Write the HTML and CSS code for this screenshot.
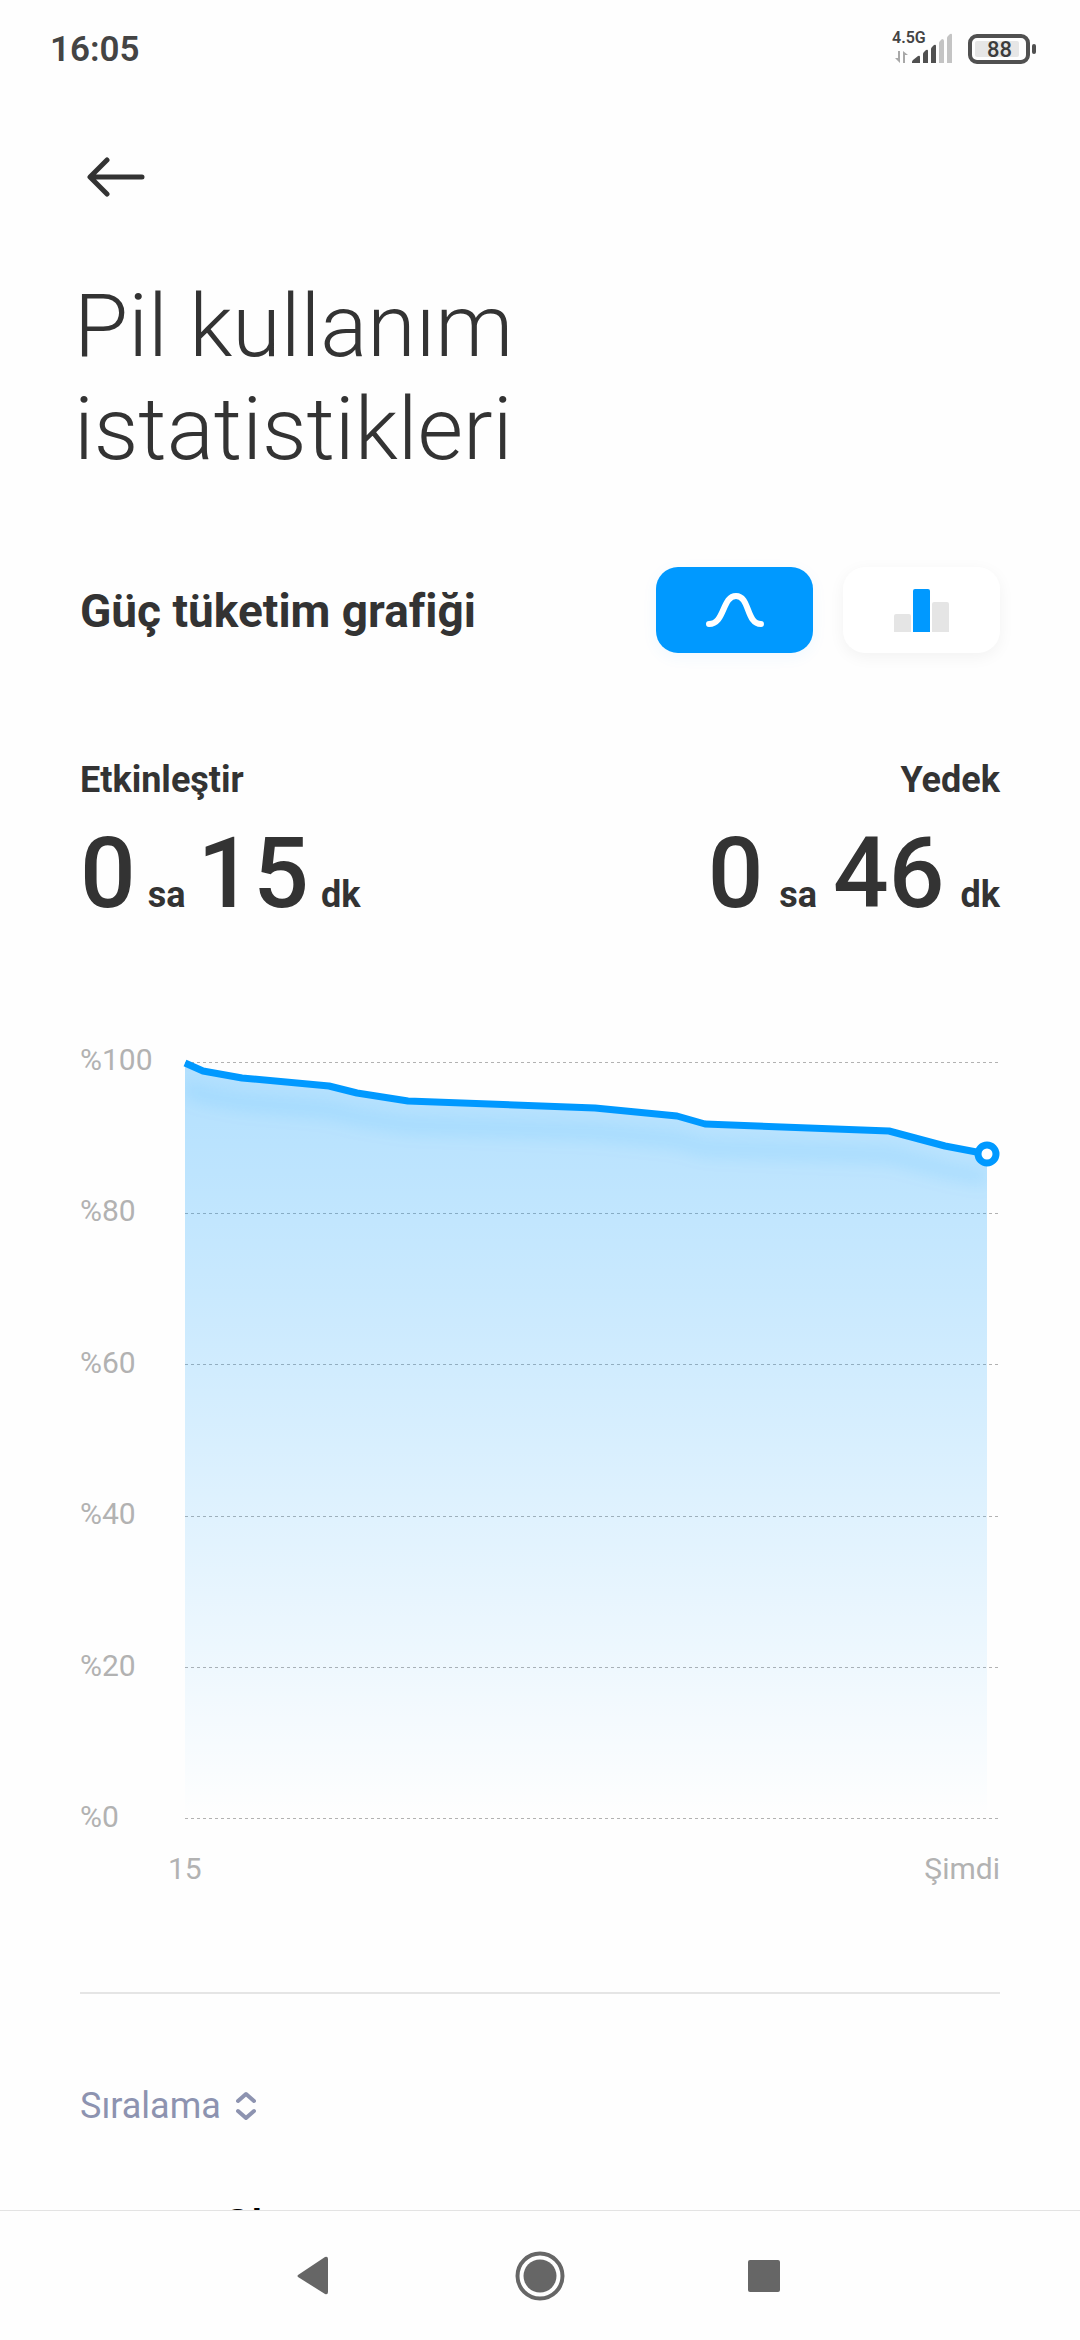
FILE: index.html
```html
<!DOCTYPE html>
<html lang="tr">
<head>
  <meta charset="utf-8">
  <meta name="viewport" content="width=device-width, initial-scale=1">
  <title>Pil kullanım istatistikleri</title>
  <link rel="stylesheet" href="styles.css">
</head>
<body>
  <header class="status-bar">
    <span class="clock">16:05</span>
    <div class="indicators">
      <div class="mobile">
        <span class="network">4.5G</span>
        <svg class="signal" viewBox="0 0 58 32" aria-hidden="true">
          <path d="M5 18V30L0 25H3V18ZM8 30V18L13 22H10V30Z" fill="#a8a8a8"/>
          <path d="M17 30V29Q17 28 18 27L23 23Q25 22 25 24V30Z" fill="#505050"/>
          <path d="M28 30V21Q28 20 29 19L31 17Q33 16 33 18V30ZM36 30V16Q36 15 37 14L39 12Q41 11 41 13V30Z" fill="#505050"/>
          <path d="M44 30V10Q44 9 45 8L47 6Q49 6 49 8V30ZM52 30V5Q52 4 53 3L55 1Q57 0 57 2V30Z" fill="#c4c4c4"/>
        </svg>
      </div>
      <div class="battery"><span class="battery-level">88</span></div>
    </div>
  </header>

  <main class="content">
    <button class="back" type="button" aria-label="Geri">
      <svg viewBox="0 0 60 42" aria-hidden="true"><path d="M55 21H4M20 4L3 21L20 38" fill="none" stroke="#333" stroke-width="5" stroke-linecap="round" stroke-linejoin="round"/></svg>
    </button>
    <h1 class="title">Pil kullanım istatistikleri</h1>

    <section class="usage">
      <div class="usage-head">
        <h2 class="usage-title">Güç tüketim grafiği</h2>
        <div class="toggle">
          <button class="toggle-button active" type="button" aria-pressed="true" aria-label="Çizgi grafik">
            <svg viewBox="0 0 60 44" aria-hidden="true"><path d="M4 36C20 36 17 8 31 8C45 8 41 36 56 36" fill="none" stroke="#fff" stroke-width="6" stroke-linecap="round"/></svg>
          </button>
          <button class="toggle-button" type="button" aria-pressed="false" aria-label="Çubuk grafik">
            <svg viewBox="0 0 60 44" aria-hidden="true"><path d="M2 44V28Q2 26 4 26H17Q19 26 19 28V44ZM40 44V16Q40 14 42 14H55Q57 14 57 16V44Z" fill="#e5e5e5"/><path d="M21 44V3Q21 1 23 1H36Q38 1 38 3V44Z" fill="#09f"/></svg>
          </button>
        </div>
      </div>

      <dl class="totals">
        <div class="total">
          <dt>Etkinleştir</dt>
          <dd><span class="number">0</span><span class="unit">sa</span><span class="number">15</span><span class="unit">dk</span></dd>
        </div>
        <div class="total total-end">
          <dt>Yedek</dt>
          <dd><span class="number">0</span><span class="unit">sa</span><span class="number">46</span><span class="unit">dk</span></dd>
        </div>
      </dl>

      <div class="chart">
        <div class="levels">
          <div class="level"><span>%100</span><i></i></div>
          <div class="level"><span>%80</span><i></i></div>
          <div class="level"><span>%60</span><i></i></div>
          <div class="level"><span>%40</span><i></i></div>
          <div class="level"><span>%20</span><i></i></div>
          <div class="level"><span>%0</span><i></i></div>
        </div>
        <div class="plot">
          <svg viewBox="0 0 802 757" preserveAspectRatio="none" aria-hidden="true">
            <defs>
              <linearGradient id="fill" x1="0" y1="0" x2="0" y2="757" gradientUnits="userSpaceOnUse">
                <stop offset="0" stop-color="#09f" stop-opacity=".3"/>
                <stop offset="1" stop-color="#09f" stop-opacity="0"/>
              </linearGradient>
              <filter id="soft" x="-10%" y="-50%" width="120%" height="250%"><feGaussianBlur stdDeviation="8"/></filter>
              <clipPath id="area"><path d="M0 0L18 8L57 15L144 23L172 30L223 38L410 45L492 53L520 61L704 68L760 83L802 91V757H0Z"/></clipPath>
            </defs>
            <path d="M0 0L18 8L57 15L144 23L172 30L223 38L410 45L492 53L520 61L704 68L760 83L802 91V757H0Z" fill="url(#fill)"/>
            <g clip-path="url(#area)"><path d="M0 24L18 32L57 39L144 47L172 54L223 62L410 69L492 77L520 85L704 92L760 107L802 115" fill="none" stroke="#09f" stroke-opacity=".1" stroke-width="16" filter="url(#soft)"/></g>
            <path d="M0 0L18 8L57 15L144 23L172 30L223 38L410 45L492 53L520 61L704 68L760 83L802 91" fill="none" stroke="#09f" stroke-width="7" stroke-linejoin="round" vector-effect="non-scaling-stroke"/>
          </svg>
          <span class="marker"></span>
        </div>
        <div class="times"><span class="time-start">15</span><span>Şimdi</span></div>
      </div>
    </section>

    <button class="sort" type="button">Sıralama
      <svg viewBox="0 0 20 30" aria-hidden="true"><path d="M2 10L10 3L18 10M2 20L10 27L18 20" fill="none" stroke="#8d93b0" stroke-width="4" stroke-linecap="round" stroke-linejoin="round"/></svg>
    </button>
    <ul class="apps">
      <li>Chrome</li>
    </ul>
  </main>

  <nav class="nav-bar">
    <button type="button" aria-label="Geri"><svg viewBox="0 0 50 50" aria-hidden="true"><path d="M7 24L34 6Q37 5 37 8V41Q37 44 34 43L7 26Q6 25 7 24Z" fill="#666"/></svg></button>
    <button type="button" aria-label="Ana ekran"><svg viewBox="0 0 50 50" aria-hidden="true"><circle cx="25" cy="25" r="22.5" fill="none" stroke="#666" stroke-width="4"/><circle cx="25" cy="25" r="16.5" fill="#666"/></svg></button>
    <button type="button" aria-label="Son uygulamalar"><svg viewBox="0 0 50 50" aria-hidden="true"><rect x="9" y="9" width="32" height="32" rx="2" fill="#666"/></svg></button>
  </nav>
</body>
</html>
```

FILE: styles.css
```css
* {
  box-sizing: border-box;
}

body {
  display: flex;
  flex-direction: column;
  height: 100vh;
  margin: 0;
  background: #fefefe;
  color: #333;
  font-family: Roboto, "Noto Sans", sans-serif;
}

button {
  padding: 0;
  border: 0;
  background: none;
  color: inherit;
  font: inherit;
}

svg {
  display: block;
}

h1, h2, dl, dd, ul {
  margin: 0;
  padding: 0;
  font-weight: inherit;
}

/* Status bar */
.status-bar {
  display: flex;
  flex: none;
  align-items: center;
  justify-content: space-between;
  height: 98px;
  padding: 0 50px;
}

.clock {
  color: #444;
  font-size: 35px;
  font-weight: 600;
}

.indicators {
  display: flex;
  align-items: center;
  gap: 15px;
}

.mobile {
  position: relative;
}

.network {
  position: absolute;
  left: -3px;
  top: -3px;
  color: #444;
  font-size: 16px;
  font-weight: 600;
  line-height: 16px;
}

.signal {
  width: 58px;
  height: 32px;
}

.battery {
  position: relative;
  width: 62px;
  height: 30px;
  padding: 3px;
  border: 4px solid #505050;
  border-radius: 9px;
}

.battery::after {
  content: "";
  position: absolute;
  top: 6px;
  right: -10px;
  width: 4px;
  height: 10px;
  border-radius: 2px;
  background: #505050;
}

.battery-level {
  display: block;
  width: 44px;
  height: 16px;
  padding-right: 7px;
  border-radius: 2px;
  background: #e6e6e6;
  color: #3c3c3c;
  font-size: 22px;
  font-weight: 500;
  line-height: 18px;
  text-align: right;
}

/* Page */
.content {
  flex: 1;
  min-height: 0;
  padding: 0 80px;
  overflow-y: auto;
  scrollbar-width: none;
}

.back {
  display: block;
  margin: 58px 0 0 7px;
}

.back svg {
  width: 60px;
  height: 42px;
}

.title {
  width: 500px;
  margin: 76px 0 0 -6px;
  font-size: 88px;
  font-weight: 300;
  line-height: 103px;
}

.usage {
  padding-bottom: 105px;
  border-bottom: 2px solid #e5e5e5;
}

.usage-head {
  display: flex;
  align-items: center;
  justify-content: space-between;
  margin-top: 87px;
}

.usage-title {
  padding-top: 2px;
  font-size: 46px;
  font-weight: 700;
}

.toggle {
  display: flex;
  gap: 30px;
}

.toggle-button {
  display: flex;
  align-items: center;
  justify-content: center;
  width: 157px;
  height: 86px;
  border-radius: 22px;
  background: #fff;
  box-shadow: 0 4px 16px rgba(0, 0, 0, 0.05);
}

.toggle-button.active {
  background: #09f;
  box-shadow: 0 4px 16px rgba(0, 153, 255, 0.06);
}

.toggle-button svg {
  width: 60px;
  height: 44px;
}

.totals {
  display: flex;
  justify-content: space-between;
  margin-top: 105px;
}

.total-end {
  text-align: right;
}

.total dt,
.unit {
  font-size: 36px;
  font-weight: 700;
  line-height: 44px;
}

.total dd {
  display: flex;
  align-items: baseline;
  gap: 12px;
  margin-top: 14px;
}

.total-end dd {
  gap: 16px;
}

.number {
  font-size: 98px;
  font-weight: 500;
  line-height: 116px;
}

/* Chart */
.chart {
  position: relative;
  margin-top: 110px;
  color: #b2b2b2;
  font-size: 30px;
  line-height: 36px;
}

.levels {
  display: flex;
  flex-direction: column;
  justify-content: space-between;
  height: 793px;
}

.level {
  display: flex;
  align-items: center;
}

.level span {
  width: 105px;
}

.level i {
  flex: 1;
  height: 1px;
  margin-top: 4px;
  background: repeating-linear-gradient(90deg, #b2b2b2 0 3px, transparent 3px 6px);
}

.plot {
  position: absolute;
  top: 21px;
  left: 105px;
  right: 13px;
  height: 757px;
}

.plot svg {
  width: 100%;
  height: 100%;
  overflow: visible;
}

.marker {
  position: absolute;
  top: 12%;
  right: 0;
  width: 25px;
  height: 25px;
  border: 7px solid #09f;
  border-radius: 50%;
  background: #fff;
  transform: translate(50%, -50%);
}

.times {
  display: flex;
  justify-content: space-between;
  margin-top: 16px;
  padding-left: 88px;
}

/* App list */
.sort {
  display: flex;
  align-items: center;
  gap: 15px;
  margin-top: 90px;
  color: #8d93b0;
  font-size: 36px;
  line-height: 44px;
}

.sort svg {
  width: 20px;
  height: 30px;
}

.apps {
  margin-top: 72px;
  padding-left: 142px;
  color: #000;
  font-size: 45px;
  font-weight: 500;
  line-height: 52px;
  list-style: none;
}

/* System navigation */
.nav-bar {
  display: flex;
  flex: none;
  align-items: center;
  justify-content: center;
  gap: 174px;
  height: 130px;
  border-top: 1px solid #e3e3e3;
}

.nav-bar svg {
  width: 50px;
  height: 50px;
}
```
